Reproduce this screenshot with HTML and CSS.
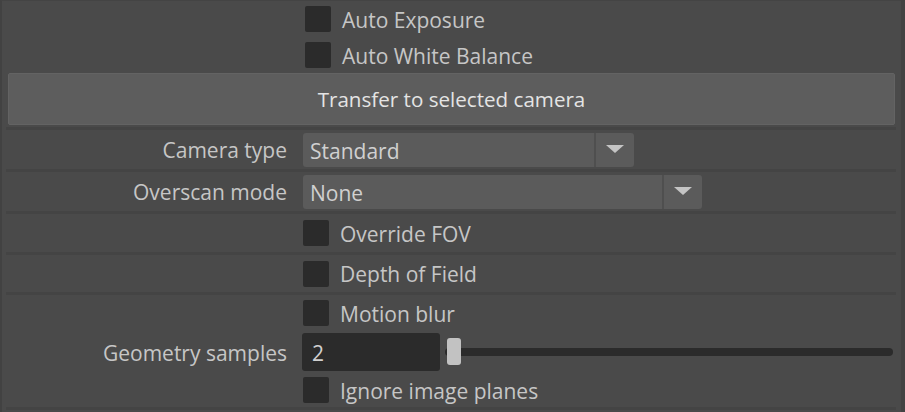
FILE: index.html
```html
<!DOCTYPE html>
<html lang="en">
<head>
    <meta charset="UTF-8">
    <title>Camera Settings</title>
    <link rel="stylesheet" href="styles.css">
</head>
<body>
    <div class="panel">
        <div class="row check-row top">
            <div class="label"></div>
            <span class="checkbox"></span><span class="check-text">Auto Exposure</span>
        </div>
        <div class="row check-row top">
            <div class="label"></div>
            <span class="checkbox"></span><span class="check-text">Auto White Balance</span>
        </div>
        <button class="wide-btn">Transfer to selected camera</button>
        <div class="sep"></div>

        <div class="row drop-row">
            <div class="label">Camera type</div>
            <div class="dropdown camera">
                <span class="value">Standard</span>
                <span class="arrow"></span>
            </div>
        </div>
        <div class="sep"></div>
        <div class="row drop-row">
            <div class="label">Overscan mode</div>
            <div class="dropdown overscan">
                <span class="value">None</span>
                <span class="arrow"></span>
            </div>
        </div>
        <div class="sep"></div>
        <div class="row check-row tall">
            <div class="label"></div>
            <span class="checkbox"></span><span class="check-text">Override FOV</span>
        </div>
        <div class="sep"></div>
        <div class="row check-row dof">
            <div class="label"></div>
            <span class="checkbox"></span><span class="check-text">Depth of Field</span>
        </div>
        <div class="sep"></div>
        <div class="row check-row">
            <div class="label"></div>
            <span class="checkbox"></span><span class="check-text">Motion blur</span>
        </div>
        <div class="row slider-row">
            <div class="label">Geometry samples</div>
            <div class="num-field">2</div>
            <div class="slider">
                <div class="track"></div>
                <div class="handle"></div>
            </div>
        </div>
        <div class="row check-row last">
            <div class="label"></div>
            <span class="checkbox"></span><span class="check-text">Ignore image planes</span>
        </div>
        <div class="sep"></div>
    </div>
</body>
</html>
```

FILE: styles.css
```css
html, body { margin: 0; padding: 0; background: #4a4a4a; }
body { font-family: "Open Sans", "Noto Sans", sans-serif; font-size: 21px; color: #c6c6c6; overflow: hidden; }
.panel { width: 905px; height: 412px; box-sizing: border-box; border-left: 2px solid #424242; border-right: 4px solid #434343; border-top: 1px solid #444; background: #4a4a4a; }

.row { display: flex; align-items: center; }
.label { width: 285px; flex: none; text-align: right; margin-right: 16px; white-space: nowrap; line-height: 1; position: relative; top: 1px; }

.check-row { height: 36px; }
.check-row.top .checkbox { margin-left: 2px; }
.check-row.tall { height: 38px; }
.check-row.dof { height: 37px; }
.check-row.last { height: 34px; }
.checkbox { width: 26px; height: 26px; background: #2b2b2b; border-radius: 2px; flex: none; }
.check-text { margin-left: 11px; line-height: 1; position: relative; top: 1px; }

.wide-btn { display: block; margin: 0 0 0 6px; width: 887px; height: 52px; background: #5d5d5d; border: 1px solid #636363; border-radius: 2px; font-family: inherit; font-size: 20.6px; color: #e4e4e4; padding: 0; }
.sep { height: 3px; margin: 0 5px 0 4px; background: #444444; }
.wide-btn + .sep { margin-top: 2px; }

.drop-row { height: 39px; }
.dropdown { display: flex; height: 34px; background: #5b5b5b; border-radius: 3px; overflow: hidden; }
.dropdown.camera { width: 331px; }
.dropdown.overscan { width: 399px; }
.dropdown .value { flex: 1; padding-left: 7px; line-height: 36px; color: #d0d0d0; }
.dropdown .arrow { width: 38px; border-left: 2px solid #4f4f4f; display: flex; align-items: center; justify-content: center; }
.dropdown .arrow::after { content: ""; border-left: 9px solid transparent; border-right: 9px solid transparent; border-top: 8px solid #c4c4c4; margin-top: -1px; }

.slider-row { height: 42px; }
.num-field { width: 128px; height: 38px; margin-left: -1px; padding-left: 10px; background: #2b2b2b; border-radius: 3px; line-height: 40px; color: #d0d0d0; flex: none; }
.slider { position: relative; flex: 1; height: 28px; margin-left: 5px; margin-right: 8px; }
.track { position: absolute; left: 0; right: 0; top: 10px; height: 8px; background: #2b2b2b; border-radius: 4px; }
.handle { position: absolute; left: 2px; top: 0; width: 14px; height: 27px; background: #c2c2c2; border-radius: 3px; }
```
